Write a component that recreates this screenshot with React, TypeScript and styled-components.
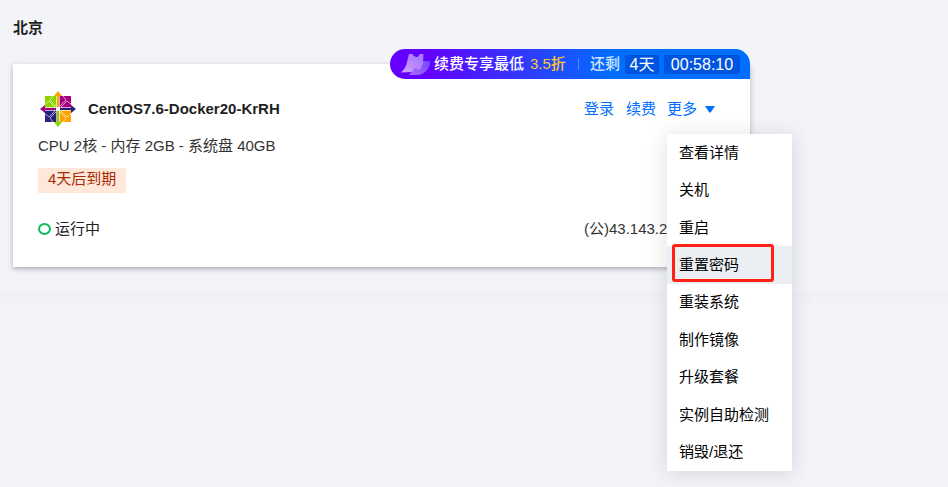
import React from "react";
import styled, { createGlobalStyle } from "styled-components";

const GlobalStyle = createGlobalStyle`
  *, *::before, *::after { box-sizing: border-box; }
  body {
    margin: 0;
    background: #f3f4f8;
    color: #1f1f1f;
    font: 15px/22px "Liberation Sans", "Noto Sans CJK SC", sans-serif;
  }
  button { font: inherit; border: 0; padding: 0; background: none; cursor: pointer; }
  h1, h2, p, ul { margin: 0; padding: 0; }
`;

const Page = styled.main`
  min-height: 100vh;
`;

const Region = styled.section`
  padding: 17px 13px 25px;
`;

const RegionTitle = styled.h1`
  font-size: 15px;
  line-height: 22px;
  color: #222;
`;

const Card = styled.article`
  position: relative;
  max-width: 737px;
  margin-top: 25px;
  padding: 25px 25px 27px;
  background: #fff;
  box-shadow: 0 2px 5px rgba(54, 58, 80, 0.38);
`;

const Columns = styled.div`
  display: grid;
  grid-template-columns: 1fr 141px;
  align-items: center;
`;

const NameRow = styled.div`
  display: flex;
  align-items: center;
  gap: 10px;
  height: 40px;
`;

const InstanceName = styled.h2`
  font-size: 15px;
  line-height: 22px;
`;

const Actions = styled.div`
  display: flex;
  align-items: center;
  gap: 12px;
`;

const ActionLink = styled.a`
  color: #006eff;
  text-decoration: none;
`;

const MoreWrap = styled.div`
  position: relative;
  margin-left: -1px;
`;

const MoreButton = styled.button`
  display: flex;
  align-items: center;
  gap: 8px;
  color: #006eff;
`;

const Menu = styled.ul`
  position: absolute;
  z-index: 2;
  top: 36px;
  left: 0;
  display: grid;
  grid-template-rows: repeat(9, 1fr);
  width: 125px;
  height: 337px;
  list-style: none;
  background: #fff;
  box-shadow: 0 2px 20px rgba(54, 58, 80, 0.16);
`;

const MenuItem = styled.li<{ $active?: boolean }>`
  display: flex;
  position: relative;
  background: ${(p) => (p.$active ? "#ebeef2" : "#fff")};
`;

const MenuButton = styled.button`
  flex: 1;
  padding: 0 12px;
  text-align: left;
  color: #000;
`;

const Highlight = styled.span`
  position: absolute;
  inset: -2px 18px 2px 5px;
  border: 3px solid #ff2116;
  border-radius: 3px;
  pointer-events: none;
`;

const Spec = styled.p`
  margin-top: 6px;
  color: #333;
`;

const Expiry = styled.span`
  display: block;
  width: fit-content;
  height: 25px;
  margin-top: 11px;
  padding: 0 10px;
  background: #ffe8d9;
  color: #a62c05;
`;

const StatusRow = styled(Columns)`
  margin-top: 25px;
  color: #333;
`;

const Status = styled.p`
  display: flex;
  align-items: center;
  gap: 4px;
  color: #222;
`;

const StatusDot = styled.span`
  width: 13px;
  height: 12px;
  border: 2px solid #0abf5b;
  border-radius: 50%;
`;

const Promo = styled.div`
  position: absolute;
  top: -15px;
  right: 0;
  display: flex;
  align-items: center;
  width: 360px;
  height: 30px;
  padding: 0 10px 0 9px;
  border-radius: 15px 15px 0 15px;
  background: linear-gradient(90deg, #6400ff 0%, #6400ff 10%, #006eff 62%);
  color: #fff;
  white-space: nowrap;
`;

const PromoText = styled.span`
  margin-left: 3px;
  font-weight: 500;
`;

const Discount = styled.span`
  margin-left: 6px;
  font-weight: 500;
  color: #ffc52e;
`;

const Divider = styled.span`
  width: 1px;
  height: 12px;
  margin: 0 11px 0 12px;
  background: #4790fb;
`;

const Remaining = styled.span`
  margin-right: auto;
  color: #cfe2ff;
  font-weight: 500;
`;

const TimeBox = styled.span<{ $wide?: boolean }>`
  width: ${(p) => (p.$wide ? "76px" : "34px")};
  margin-left: 5px;
  border-radius: 2px;
  background: #0055e0;
  font-size: 16px;
  line-height: 19px;
  text-align: center;
`;

const NextSection = styled.section`
  height: 16px;
  background: linear-gradient(#eff0f4, #f3f4f8);
`;

function CentosLogo() {
  return (
    <svg width="40" height="40" viewBox="-20 -20 40 40" aria-hidden="true">
      <path fill="#8fd400" d="M-13-13H-1V-1H-13z" />
      <path fill="#a5007f" d="M1-13H13V-1H1z" />
      <path fill="#29207c" d="M-13 1H-1V13H-13z" />
      <path fill="#ffa300" d="M1 1H13V13H1z" />
      <g fill="none" stroke="#fff" strokeOpacity=".6" strokeWidth="1">
        <path d="M-2-3-8-9-5-13M-3-2-9-8-13-5" />
        <path d="M2-3 8-9 5-13M3-2 9-8 13-5" />
        <path d="M-2 3-8 9-5 13M-3 2-9 8-13 5" />
        <path d="M2 3 8 9 5 13M3 2 9 8 13 5" />
      </g>
      <path fill="#ffa300" d="M0-18 4-13H1V-2H-1V-13H-4z" />
      <path fill="#29207c" d="M18 0 13 4V1H2V-1H13V-4z" />
      <path fill="#8fd400" d="M0 18-4 13H-1V2H1V13H4z" />
      <path fill="#a5007f" d="M-18 0-13-4V-1H-2V1H-13V4z" />
      <path
        fill="none"
        stroke="#fff"
        strokeOpacity=".8"
        strokeWidth=".8"
        d="M-1.5-13V-1.5H-13M1.5-13V-1.5H13M-1.5 13V1.5H-13M1.5 13V1.5H13"
      />
      <path fill="#fff" d="M-2-2h4v4h-4z" />
    </svg>
  );
}

function PromoMark() {
  return (
    <svg width="32" height="28" viewBox="0 0 32 28" aria-hidden="true">
      <defs>
        <linearGradient id="mark" x1="0" y1="1" x2="1" y2="0">
          <stop offset="0" stopColor="#d0a7ff" />
          <stop offset=".5" stopColor="#b886ff" />
          <stop offset="1" stopColor="#9d75ff" />
        </linearGradient>
        <linearGradient id="fold" x1="0" y1="1" x2="1" y2="0">
          <stop offset="0" stopColor="#a86aff" />
          <stop offset="1" stopColor="#7247ff" />
        </linearGradient>
      </defs>
      <path fill="url(#fold)" d="M23 11H31Q31 17 28 20 24 25 18 25H10L14 20z" />
      <path
        fill="url(#mark)"
        d="M10 4H13.5Q15 7.5 18 7 20 6.500 20.500 4H24.500L24 13Q23 18 20 20 18 18 16 18.500 14 19 14 21.500L12 22 2 22.500Q7 18 8 12z"
      />
    </svg>
  );
}

const menuItems = [
  "查看详情",
  "关机",
  "重启",
  "重置密码",
  "重装系统",
  "制作镜像",
  "升级套餐",
  "实例自助检测",
  "销毁/退还",
];

export default function App() {
  return (
    <Page lang="zh-CN">
      <GlobalStyle />
      <Region>
        <RegionTitle>北京</RegionTitle>
        <Card>
          <Promo>
            <PromoMark />
            <PromoText>续费专享最低</PromoText>
            <Discount>3.5折</Discount>
            <Divider />
            <Remaining>还剩</Remaining>
            <TimeBox>4天</TimeBox>
            <TimeBox $wide>00:58:10</TimeBox>
          </Promo>
          <Columns>
            <NameRow>
              <CentosLogo />
              <InstanceName>CentOS7.6-Docker20-KrRH</InstanceName>
            </NameRow>
            <Actions>
              <ActionLink href="#login">登录</ActionLink>
              <ActionLink href="#renew">续费</ActionLink>
              <MoreWrap>
                <MoreButton type="button" aria-haspopup="true" aria-expanded="true">
                  更多
                  <svg width="10" height="7" viewBox="0 0 10 7" aria-hidden="true">
                    <path d="M0 0H10L6 6Q5 7 4 6z" fill="#006eff" />
                  </svg>
                </MoreButton>
                <Menu>
                  {menuItems.map((label) => {
                    const active = label === "重置密码";
                    return (
                      <MenuItem key={label} $active={active}>
                        <MenuButton type="button">{label}</MenuButton>
                        {active && <Highlight />}
                      </MenuItem>
                    );
                  })}
                </Menu>
              </MoreWrap>
            </Actions>
          </Columns>
          <Spec>CPU 2核 - 内存 2GB - 系统盘 40GB</Spec>
          <Expiry>4天后到期</Expiry>
          <StatusRow>
            <Status>
              <StatusDot />
              运行中
            </Status>
            <span>(公)43.143.2</span>
          </StatusRow>
        </Card>
      </Region>
      <NextSection />
    </Page>
  );
}
